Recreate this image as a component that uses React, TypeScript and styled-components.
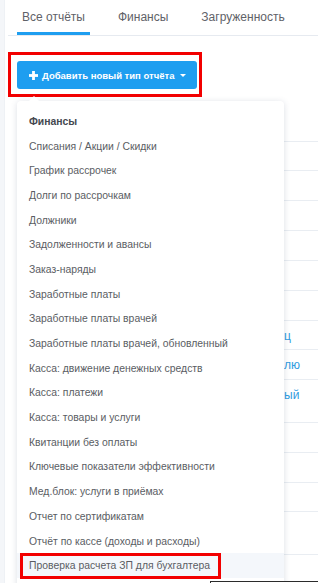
import React from "react";
import styled, { createGlobalStyle } from "styled-components";

const GlobalStyle = createGlobalStyle`
  html, body {
    margin: 0;
    padding: 0;
    overflow: hidden;
    background: #ffffff;
    font-family: "Liberation Sans", Arial, sans-serif;
  }
  * { box-sizing: border-box; }
`;

const Page = styled.div`
  display: flex;
  width: 318px;
  height: 583px;
  overflow: hidden;
`;

const SideEdge = styled.div`
  width: 5px;
  flex: none;
  background: #f4f6f9;
  border-right: 1px solid #eef1f5;
`;

const Main = styled.div`
  position: relative;
  flex: 1;
  padding-left: 3px;
`;

const TabBar = styled.div`
  display: flex;
  gap: 23px;
  padding-left: 9px;
  height: 36px;
  border-bottom: 1px solid #e6eaf0;
`;

const Tab = styled.div<{ $active?: boolean }>`
  height: 35px;
  padding: 2px 5px 0;
  display: flex;
  align-items: center;
  font-size: 12px;
  color: #5f6268;
  white-space: nowrap;
  border-bottom: 3px solid ${(p) => (p.$active ? "#1e9ef0" : "transparent")};
`;

const Toolbar = styled.div`
  margin-top: 16px;
  display: flex;
`;

const RedFrame = styled.div`
  border: 3px solid #f20000;
  padding: 6px 2px 5px 6px;
`;

const AddButton = styled.button`
  width: 180px;
  height: 28px;
  border: none;
  border-radius: 3px;
  background: #1e9ef0;
  color: #ffffff;
  font-family: "Liberation Sans", Arial, sans-serif;
  font-weight: bold;
  font-size: 9.5px;
  white-space: nowrap;
  display: flex;
  align-items: center;
  padding: 0 0 0 12px;
  gap: 4px;
`;

const Caret = styled.span`
  width: 0;
  height: 0;
  margin-left: 2px;
  border-left: 3px solid transparent;
  border-right: 3px solid transparent;
  border-top: 3px solid #ffffff;
`;

const Table = styled.div`
  margin-top: 15px;
  margin-left: 9px;
  display: flex;
  flex-direction: column;
`;

const Row = styled.div`
  border-bottom: 1px solid #e9edf2;
  display: flex;
  align-items: flex-start;
  padding-left: 267px;
`;

const LinkText = styled.span`
  font-size: 12px;
  color: #2f9be0;
  white-space: nowrap;
  margin-top: 8px;
`;

const Dropdown = styled.div`
  position: absolute;
  top: 101px;
  left: 12px;
  width: 267px;
  height: 500px;
  background: #ffffff;
  border-radius: 4px;
  box-shadow: 0 1px 6px rgba(60, 80, 110, 0.18);
  padding-top: 8px;
  &::before {
    content: "";
    position: absolute;
    top: -5px;
    left: 12px;
    width: 0;
    height: 0;
    border-left: 5px solid transparent;
    border-right: 5px solid transparent;
    border-bottom: 5px solid #ffffff;
  }
`;

const Item = styled.div<{ $header?: boolean; $selected?: boolean }>`
  height: 24.7px;
  display: flex;
  align-items: center;
  padding-left: 12px;
  font-size: 10.4px;
  white-space: nowrap;
  color: ${(p) => (p.$header ? "#454850" : "#5a5d63")};
  font-weight: ${(p) => (p.$header ? "bold" : "normal")};
  background: ${(p) => (p.$selected ? "#f4f7fb" : "transparent")};
`;

const Marked = styled.span`
  display: inline-flex;
  align-items: center;
  height: 26px;
  margin-left: -9px;
  padding: 0 8px 0 6px;
  border: 3px solid #f20000;
`;

const TooltipEdge = styled.div`
  position: absolute;
  top: 581px;
  left: 205px;
  width: 130px;
  height: 30px;
  background: #ffffff;
  border: 1px solid #2b2b2b;
`;

const rows: { h: number; text?: string }[] = [
  { h: 30 },
  { h: 29 },
  { h: 30 },
  { h: 30 },
  { h: 30 },
  { h: 30 },
  { h: 30 },
  { h: 29, text: "ц" },
  { h: 30, text: "лю" },
  { h: 43, text: "ый" },
  { h: 30 },
  { h: 30 },
  { h: 29 },
  { h: 43 },
  { h: 30 },
];

const items = [
  "Списания / Акции / Скидки",
  "График рассрочек",
  "Долги по рассрочкам",
  "Должники",
  "Задолженности и авансы",
  "Заказ-наряды",
  "Заработные платы",
  "Заработные платы врачей",
  "Заработные платы врачей, обновленный",
  "Касса: движение денежных средств",
  "Касса: платежи",
  "Касса: товары и услуги",
  "Квитанции без оплаты",
  "Ключевые показатели эффективности",
  "Мед.блок: услуги в приёмах",
  "Отчет по сертификатам",
  "Отчёт по кассе (доходы и расходы)",
];

const PlusIcon = () => (
  <svg width="9" height="9" viewBox="0 0 9 9">
    <rect x="3.1" y="0" width="2.8" height="9" fill="#fff" />
    <rect x="0" y="3.1" width="9" height="2.8" fill="#fff" />
  </svg>
);

export default function App() {
  return (
    <>
      <GlobalStyle />
      <Page>
        <SideEdge />
        <Main>
          <TabBar>
            <Tab $active>Все отчёты</Tab>
            <Tab>Финансы</Tab>
            <Tab>Загруженность</Tab>
          </TabBar>
          <Toolbar>
            <RedFrame>
              <AddButton>
                <PlusIcon />
                Добавить новый тип отчёта
                <Caret />
              </AddButton>
            </RedFrame>
          </Toolbar>
          <Table>
            {rows.map((r, i) => (
              <Row key={i} style={{ height: r.h }}>
                {r.text && <LinkText>{r.text}</LinkText>}
              </Row>
            ))}
          </Table>
          <Dropdown>
            <Item $header>Финансы</Item>
            {items.map((t) => (
              <Item key={t}>{t}</Item>
            ))}
            <Item $selected>
              <Marked>Проверка расчета ЗП для бухгалтера</Marked>
            </Item>
          </Dropdown>
          <TooltipEdge />
        </Main>
      </Page>
    </>
  );
}
